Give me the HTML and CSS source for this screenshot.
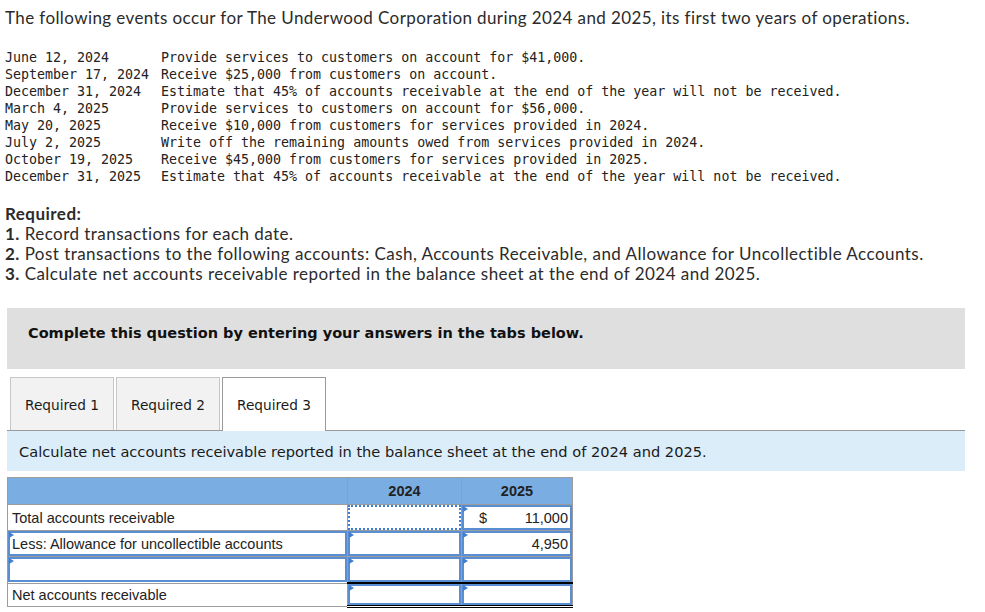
FILE: index.html
```html
<!DOCTYPE html>
<html>
<head>
<meta charset="utf-8">
<link rel="stylesheet" href="styles.css">
</head>
<body>
<p class="intro">The following events occur for The Underwood Corporation during 2024 and 2025, its first two years of operations.</p>
<div class="events">
  <span>June 12, 2024</span><span>Provide services to customers on account for $41,000.</span>
  <span>September 17, 2024</span><span>Receive $25,000 from customers on account.</span>
  <span>December 31, 2024</span><span>Estimate that 45% of accounts receivable at the end of the year will not be received.</span>
  <span>March 4, 2025</span><span>Provide services to customers on account for $56,000.</span>
  <span>May 20, 2025</span><span>Receive $10,000 from customers for services provided in 2024.</span>
  <span>July 2, 2025</span><span>Write off the remaining amounts owed from services provided in 2024.</span>
  <span>October 19, 2025</span><span>Receive $45,000 from customers for services provided in 2025.</span>
  <span>December 31, 2025</span><span>Estimate that 45% of accounts receivable at the end of the year will not be received.</span>
</div>
<div class="required">
  <div class="req-title">Required:</div>
  <div><b>1.</b> Record transactions for each date.</div>
  <div><b>2.</b> Post transactions to the following accounts: Cash, Accounts Receivable, and Allowance for Uncollectible Accounts.</div>
  <div><b>3.</b> Calculate net accounts receivable reported in the balance sheet at the end of 2024 and 2025.</div>
</div>
<div class="complete">Complete this question by entering your answers in the tabs below.</div>
<div class="tabs">
  <div class="tab">Required 1</div>
  <div class="tab">Required 2</div>
  <div class="tab active">Required 3</div>
</div>
<div class="instr">Calculate net accounts receivable reported in the balance sheet at the end of 2024 and 2025.</div>
<table class="grid">
  <colgroup><col class="w-lbl"><col class="w-c1"><col class="w-c2"></colgroup>
  <tr class="head"><th class="lbl"></th><th>2024</th><th>2025</th></tr>
  <tr>
    <td class="lbl">Total accounts receivable</td>
    <td class="in"><div class="box focus"></div></td>
    <td class="in"><div class="box"><span class="tri"></span><span class="cur">$</span><span class="val">11,000</span></div></td>
  </tr>
  <tr>
    <td class="lbl in"><div class="box"><span class="tri"></span><span class="txt">Less: Allowance for uncollectible accounts</span></div></td>
    <td class="in"><div class="box"><span class="tri"></span></div></td>
    <td class="in"><div class="box"><span class="tri"></span><span class="val">4,950</span></div></td>
  </tr>
  <tr>
    <td class="lbl in"><div class="box"><span class="tri"></span></div></td>
    <td class="in"><div class="box"><span class="tri"></span></div></td>
    <td class="in"><div class="box"><span class="tri"></span></div></td>
  </tr>
  <tr class="total">
    <td class="lbl">Net accounts receivable</td>
    <td class="in"><div class="box short"><span class="tri"></span></div></td>
    <td class="in"><div class="box short"><span class="tri"></span></div></td>
  </tr>
</table>
</body>
</html>
```
FILE: styles.css
```css
body {
  margin: 0;
  background: #fff;
  color: #2b2b2b;
  font-family: Lato, "Liberation Sans", sans-serif;
}
.intro {
  margin: 8px 0 0 5px;
  font-size: 17px;
  letter-spacing: 0.4px;
  line-height: 20px;
}
.events {
  display: grid;
  grid-template-columns: 156px auto;
  margin: 21px 0 0 5px;
  font-family: "DejaVu Sans Mono", monospace;
  font-size: 13.3px;
  line-height: 17px;
  color: #222;
  white-space: pre;
}
.required {
  margin: 19px 0 0 5px;
  font-size: 17px;
  letter-spacing: 0.46px;
  line-height: 20px;
}
.req-title { font-weight: bold; }
.complete {
  margin: 24px 0 0 7px;
  width: 958px;
  height: 61px;
  box-sizing: border-box;
  padding: 16px 0 0 21px;
  background: #dfdfdf;
  font-family: "DejaVu Sans", Verdana, sans-serif;
  font-weight: bold;
  font-size: 14.5px;
  line-height: 18px;
  color: #111;
}
.tabs {
  display: flex;
  gap: 2px;
  margin: 8px 0 0 7px;
  width: 958px;
  padding-left: 3px;
  box-sizing: border-box;
  border-bottom: 1px solid #9a9a9a;
  font-family: "DejaVu Sans", Verdana, sans-serif;
  font-size: 13.7px;
}
.tab {
  width: 104px;
  height: 53px;
  box-sizing: border-box;
  display: flex;
  align-items: center;
  justify-content: center;
  padding-top: 1px;
  background: #f2f2f2;
  border: 1px solid #c6c6c6;
  border-bottom: none;
  color: #1a1a1a;
}
.tab.active {
  background: #fff;
  border-color: #9a9a9a;
  height: 54px;
  margin-bottom: -1px;
}
.instr {
  margin: 0 0 0 7px;
  width: 958px;
  height: 40px;
  box-sizing: border-box;
  padding: 12px 0 0 12px;
  background: #dbedf9;
  font-family: "DejaVu Sans", Verdana, sans-serif;
  font-size: 14.6px;
  line-height: 18px;
  color: #1a1a1a;
}
.grid {
  margin: 6px 0 0 7px;
  width: 565px;
  table-layout: fixed;
  border-collapse: collapse;
  font-family: "Liberation Sans", Arial, sans-serif;
  font-size: 14.5px;
  color: #222;
  border: 1px solid #8c8c8c;
}
.w-lbl { width: 340px; }
.w-c1 { width: 114px; }
.w-c2 { width: 111px; }
.grid th, .grid td {
  border: 1px solid #9c9c9c;
  padding: 0;
  height: 25px;
}
.grid .head th {
  height: 26px;
  background: #7aaee3;
  font-weight: bold;
  text-align: center;
}
.grid .lbl { text-align: left; padding-left: 4px; }
.grid td.in { padding: 0; }
.box {
  position: relative;
  height: 25px;
  box-sizing: border-box;
  border: 2px solid #5a8ed2;
  display: flex;
  align-items: center;
  padding: 0 2px 0 14px;
}
.box.short { height: 21px; }
.box.focus {
  border: 2px dotted #3d7fd6;
}
.tri {
  position: absolute;
  left: -1px;
  top: -1px;
  width: 0;
  height: 0;
  border-top: 3px solid transparent;
  border-bottom: 3px solid transparent;
  border-left: 5px solid #3f7fcf;
}
.txt { margin-left: -12px; }
.cur { margin-left: 1px; }
.val { margin-left: auto; }
.total td { height: 21px; padding-top: 1px; }
.total td.in {
  padding-top: 0;
  border-top: 2px solid #000;
  border-bottom: 3px double #000;
}
```
